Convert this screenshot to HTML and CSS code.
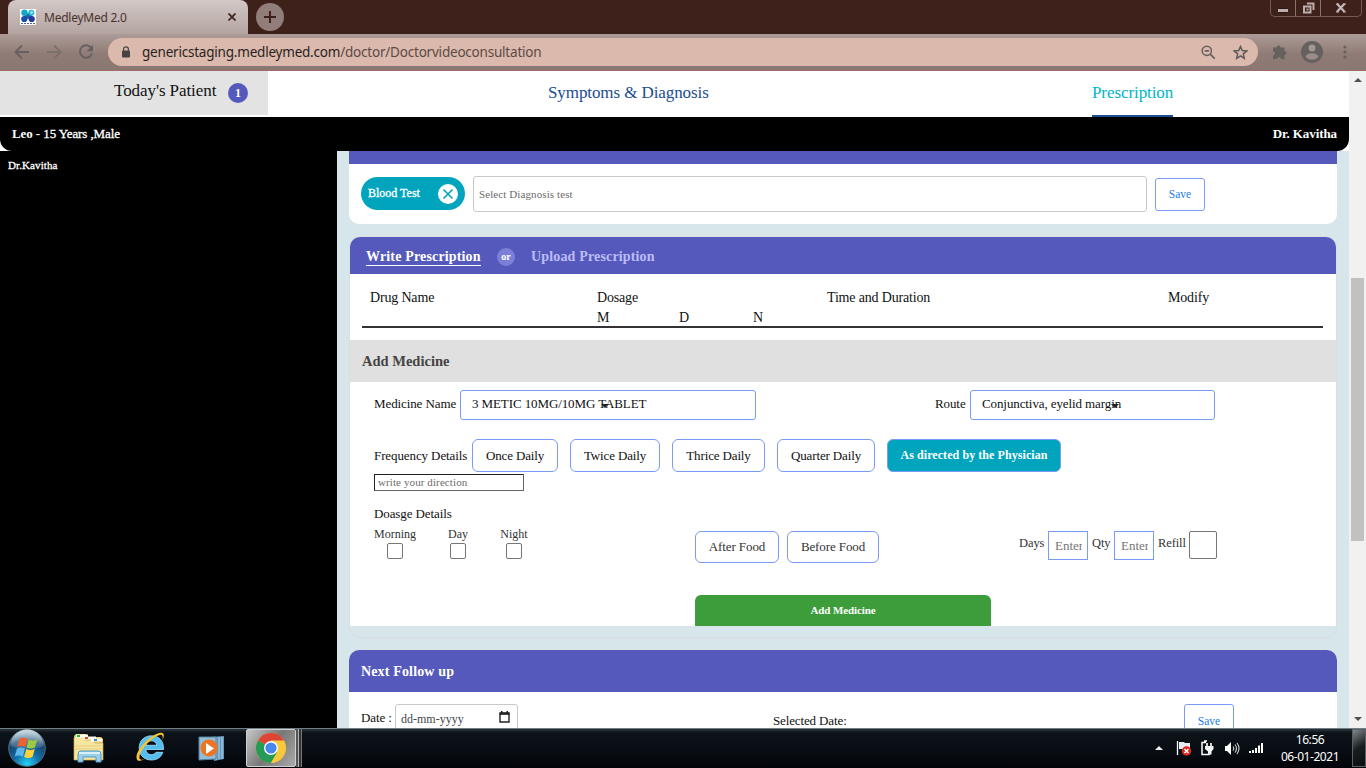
FILE: index.html
```html
<!DOCTYPE html>
<html lang="en">
<head>
<meta charset="utf-8">
<title>MedleyMed 2.0</title>
<link rel="stylesheet" href="styles.css">
</head>
<body>
<header class="titlebar">
  <div class="tab">
    <svg class="favicon" width="16" height="16" viewBox="0 0 16 16"><rect width="16" height="16" fill="#fff"/><path d="M4 4l8 6M4 10l8-6" stroke="#1c62b0" stroke-width="4" fill="none"/><circle cx="4.5" cy="3.800" r="3.200" fill="#13a9c9"/><circle cx="11.300" cy="3.800" r="3" fill="#22b8cf"/><circle cx="11.700" cy="3.500" r="1.300" fill="#b5f1f2"/><circle cx="4.300" cy="10" r="3.100" fill="#164fa8"/><circle cx="11.700" cy="10" r="3.100" fill="#233a9c"/><path d="M1 14.500h14" stroke="#4b62a8" stroke-dasharray="2 1"/></svg>
    <span class="tab-title">MedleyMed 2.0</span>
    <svg class="tab-close" width="8" height="8" viewBox="0 0 8 8"><path d="M.5.5l7 7M7.5.5l-7 7" stroke="#3d2420" stroke-width="1.700"/></svg>
  </div>
  <div class="new-tab"><svg width="12" height="12" viewBox="0 0 12 12"><path d="M6 0v12M0 6h12" stroke="#3d201b" stroke-width="2"/></svg></div>
  <div class="window-buttons">
    <span class="wb"><svg width="12" height="12" viewBox="0 0 12 12"><rect x=".5" y="6.500" width="11" height="4" rx="1" fill="#bcaeac" stroke="#2a1511"/></svg></span>
    <span class="wb"><svg width="13" height="13" viewBox="0 0 13 13"><path d="M5 1.500h6.500v6.500M3 4.500h5.500v6H2v-6z" fill="none" stroke="#bcaeac" stroke-width="2"/><rect x="4.500" y="6.500" width="2" height="2" fill="#bcaeac"/></svg></span>
    <span class="wb wb-close"><svg width="12" height="10" viewBox="0 0 12 10"><path d="M2 .8l7.500 8M9.500 .8l-7.500 8" stroke="#c4b7b5" stroke-width="2.300"/><path d="M1 1h3M8 1h3M1 9h3M8 9h3" stroke="#c4b7b5" stroke-width="1.200"/></svg></span>
  </div>
</header>
<nav class="toolbar">
  <svg class="nav-icon" width="16" height="16" viewBox="0 0 16 16"><path d="M15 8H2M8 1.500L1.500 8 8 14.500" fill="none" stroke="#666160" stroke-width="2"/></svg>
  <svg class="nav-icon" width="16" height="16" viewBox="0 0 16 16"><path d="M1 8h13M8 1.500L14.500 8 8 14.500" fill="none" stroke="#7d716e" stroke-width="2"/></svg>
  <svg class="nav-icon" width="16" height="16" viewBox="0 0 16 16"><path d="M13.200 4A6.200 6.200 0 1 0 14 9.500" fill="none" stroke="#666160" stroke-width="2"/><path d="M15 .8v6.500H8.500z" fill="#666160"/></svg>
  <div class="address">
    <svg width="10" height="12" viewBox="0 0 10 12"><rect x="1" y="4.500" width="8" height="7" rx="1" fill="#4b4342"/><path d="M2.600 5V3.200a2.400 2.400 0 0 1 4.800 0V5" fill="none" stroke="#4b4342" stroke-width="1.200"/></svg>
    <span class="url">genericstaging.medleymed.com<span class="url-path">/doctor/Doctorvideoconsultation</span></span>
    <svg class="zoom" width="15" height="15" viewBox="0 0 15 15"><circle cx="5.800" cy="5.800" r="4.600" fill="none" stroke="#68605e" stroke-width="1.500"/><path d="M3.700 5.800h4.200M9.200 9.200l4.500 4.500" stroke="#68605e" stroke-width="1.700"/></svg>
    <svg class="star" width="15" height="15" viewBox="0 0 15 15"><path d="M7.500 1.500l1.800 4.100 4.400.4-3.400 2.900 1 4.400-3.800-2.400-3.800 2.400 1-4.400L1.300 6l4.400-.4z" fill="none" stroke="#5f5957" stroke-width="1.500"/></svg>
  </div>
  <svg class="puzzle" width="16" height="16" viewBox="0 0 16 16"><path d="M1 3.500h3.500a2 2 0 1 1 4 0H12.500V7a2 2 0 1 1 0 4v4H9a2 2 0 0 0-4 0H1v-3.500a2 2 0 0 0 0-4z" fill="#66605f"/></svg>
  <svg class="avatar" width="22" height="22" viewBox="0 0 22 22"><circle cx="11" cy="11" r="11" fill="#66605f"/><circle cx="11" cy="7" r="3.400" fill="#a59894"/><path d="M4.500 15.500c1-2.600 4-3.300 6.500-3.300s5.500.7 6.500 3.300c-1.500 2.200-4 3.300-6.500 3.300s-5-1.100-6.500-3.300z" fill="#9b8c87"/></svg>
  <svg class="kebab" width="4" height="14" viewBox="0 0 4 14"><g fill="#66605f"><circle cx="2" cy="2" r="1.600"/><circle cx="2" cy="7" r="1.600"/><circle cx="2" cy="12" r="1.600"/></g></svg>
</nav>
<div class="viewport">
  <main class="page">
    <div class="page-tabs">
      <div class="today"><span class="today-text">Today's Patient</span><span class="count">1</span></div>
      <div class="symptoms">Symptoms &amp; Diagnosis</div>
      <div class="presc-tab">Prescription</div>
    </div>
    <div class="patient-wrap"><div class="patient-bar"><b>Leo - <span class="age">15 Years ,Male</span></b><b class="doctor">Dr. Kavitha</b></div></div>
    <div class="work">
      <aside class="video">Dr.Kavitha</aside>
      <section class="cards">
        <div class="card diagnosis">
          <div class="strip"></div>
          <div class="diag-row">
            <span class="chip"><span class="chip-text">Blood Test</span><svg width="20" height="20" viewBox="0 0 20 20"><circle cx="10" cy="10" r="10" fill="#fff"/><path d="M5.500 5.500l9 9M14.500 5.500l-9 9" stroke="#00a4bd" stroke-width="1.600"/></svg></span>
            <span class="diag-input">Select Diagnosis test</span>
            <span class="save">Save</span>
          </div>
        </div>
        <div class="card rx">
          <div class="rx-head"><span class="write">Write Prescription</span><span class="or">or</span><span class="upload">Upload Prescription</span></div>
          <div class="drug-table">
            <div class="drug-row"><span>Drug Name</span><span>Dosage</span><span>Time and Duration</span><span>Modify</span></div>
            <div class="dose-row"><span>M</span><span>D</span><span>N</span></div>
          </div>
          <div class="add-head">Add Medicine</div>
          <div class="form">
            <div class="name-row">
              <span class="l-name">Medicine Name</span><span class="select med"><span>3 METIC 10MG/10MG TABLET</span><i class="caret"></i></span>
              <span class="l-route">Route</span><span class="select route"><span>Conjunctiva, eyelid margin</span><i class="caret"></i></span>
            </div>
            <div class="freq-row">
              <span class="l-freq">Frequency Details</span>
              <span class="pill p1">Once Daily</span><span class="pill p2">Twice Daily</span><span class="pill p3">Thrice Daily</span><span class="pill p4">Quarter Daily</span><span class="pill p5">As directed by the Physician</span>
            </div>
            <div class="direction">write your direction</div>
            <div class="l-dosage">Doasge Details</div>
            <div class="dosage-row">
              <div class="check"><span>Morning</span><i class="box"></i></div>
              <div class="check day"><span>Day</span><i class="box"></i></div>
              <div class="check night"><span>Night</span><i class="box"></i></div>
              <div class="intake">
                <span class="food after">After Food</span><span class="food before">Before Food</span>
                <span class="l-num l-days">Days</span><span class="num"><span>Enter</span></span>
                <span class="l-num l-qty">Qty</span><span class="num"><span>Enter</span></span>
                <span class="l-num l-refill">Refill</span><span class="refill"></span>
              </div>
            </div>
            <div class="add-btn">Add Medicine</div>
          </div>
        </div>
        <div class="card follow">
          <div class="follow-head">Next Follow up</div>
          <div class="follow-row">
            <span class="l-date">Date :</span>
            <span class="date-input"><span>dd-mm-yyyy</span><svg width="11" height="12" viewBox="0 0 11 12"><path d="M1 2.500h9v8.500H1z" fill="none" stroke="#222" stroke-width="1.400"/><path d="M.5 1.200h10v2.600H.5zM2 0h1.500v2H2zM7.500 0H9v2H7.500z" fill="#222"/></svg></span>
            <span class="selected">Selected Date:</span>
            <span class="save follow-save">Save</span>
          </div>
        </div>
      </section>
    </div>
  </main>
  <div class="scrollbar">
    <svg width="8" height="4" viewBox="0 0 8 4"><path d="M0 4l4-4 4 4z" fill="#505050"/></svg>
    <div class="thumb"></div>
    <svg width="8" height="4" viewBox="0 0 8 4"><path d="M0 0l4 4 4-4z" fill="#505050"/></svg>
  </div>
</div>
<footer class="taskbar">
  <svg class="start" width="38" height="38" viewBox="0 0 38 38"><defs><radialGradient id="orb" cx=".5" cy=".95" r=".9"><stop offset="0" stop-color="#25d5f8"/><stop offset=".4" stop-color="#126ca6"/><stop offset=".75" stop-color="#18436c"/><stop offset="1" stop-color="#7f9fb4"/></radialGradient><linearGradient id="shine" x2="0" y2="1"><stop offset="0" stop-color="#dbe8ec" stop-opacity=".85"/><stop offset="1" stop-color="#b2cad6" stop-opacity=".15"/></linearGradient></defs><circle cx="19" cy="19" r="18.300" fill="url(#orb)" stroke="#526d7e"/><path d="M2.500 17a16.500 16.500 0 0 1 33 0c-9 4-24 4-33 0z" fill="url(#shine)"/><path d="M11.500 10q4-2.500 8 0l-2.200 8q-4-2.200-8 0z" fill="#ef6230"/><path d="M20.700 10.500q4.500 2 8.500-.3l-2.200 8q-4 2.300-8.500.3z" fill="#9bcb43"/><path d="M9 19.500q4-2.200 8 0l-2.200 8q-4-2.200-8 0z" fill="#5db9ed"/><path d="M18.300 20q4.500 2 8.500-.3l-2.200 8q-4 2.300-8.500.3z" fill="#fdd13a"/></svg>
  <svg class="explorer" width="34" height="31" viewBox="0 0 34 31"><path d="M2 3l2-2h10l2 3h13l2 2v21H2z" fill="#e8ce74"/><path d="M4 3h9v4h9l1 3h8v17H2V5z" fill="#f7e6a0" stroke="#c8a84f" stroke-width=".7"/><path d="M4 1.500h12v3H4zM12 3.500h12v3H12zM19 5.500h11v3H19z" fill="#fbfbf1"/><path d="M5 2h3v2H5z" fill="#27b33a"/><path d="M13 4h3v2h-3z" fill="#d94b2d"/><path d="M22 6h3v2h-3z" fill="#3b8cd8"/><path d="M3 13h28M3 16h28" stroke="#e8cf80"/><path d="M6 29V21q0-3 3-3h17q3 0 3 3v8h-5v-5H11v5z" fill="#9bcfe9" stroke="#4e9cc8"/><path d="M7 20h21" stroke="#d9f0f8" stroke-width="2"/></svg>
  <svg class="ie" width="32" height="32" viewBox="0 0 32 32"><path d="M28.500 18.500H10.800c.4 3.200 2.500 5.200 5.500 5.200 2.200 0 3.500-.8 4.700-2.400h6.800c-1.700 5.100-5.800 7.700-11.300 7.700-7.200 0-12.300-4.700-12.300-12S9.300 4.800 16.400 4.800c7.800 0 12.500 5.300 12.100 13.700zM10.900 14.300h10.800c-.4-2.900-2.400-4.500-5.300-4.500s-5 1.700-5.500 4.500z" fill="#54bdf0" stroke="#a6e1fb" stroke-width=".8"/><path d="M27.500 9c2.500-5 1.500-8-3-7C15 4 2 18 1.500 26c-.2 5 4 4.500 8 2-3.500 1.300-5.500.8-5-2.500C5.500 18 17 6 24.500 4c3-.8 3.700 1.300 3 5z" fill="#f6c52f"/></svg>
  <svg class="media" width="27" height="27" viewBox="0 0 27 27"><path d="M12 2l14-1v23l-10 2z" fill="#6595ba"/><path d="M18 2v23M21 2v22M24 2v22" stroke="#b4d9ec"/><path d="M1 2l17 0v22L1 25z" fill="#90bed7" stroke="#547f9f"/><circle cx="11" cy="13" r="8.500" fill="#ef7421"/><path d="M8 8v11l8-5.500z" fill="#fff"/></svg>
  <div class="chrome-button"><svg width="30" height="30" viewBox="0 0 30 30"><circle cx="15" cy="15" r="15" fill="#f7c93b"/><path d="M15 15L2 7.500A15 15 0 0 1 28 7.500H15z" fill="#dc4535"/><path d="M2 7.500A15 15 0 0 0 15 30l6.500-11.300L15 15z" fill="#259b55"/><path d="M15 8h13A15 15 0 0 1 15 30l6.500-11.300z" fill="#f7c93b"/><circle cx="15" cy="15" r="7" fill="#fff"/><circle cx="15" cy="15" r="5.600" fill="#4688ee"/></svg></div>
  <i class="stack"></i><i class="stack stack-2"></i>
  <div class="tray">
    <svg width="8" height="4" viewBox="0 0 8 4"><path d="M0 4l4-4 4 4z" fill="#eee"/></svg>
    <svg class="flag" width="16" height="16" viewBox="0 0 16 16"><path d="M1.500 1v14" stroke="#fff" stroke-width="1.300"/><path d="M3 2h5l1 1h5v7H8L7 9H3z" fill="#e8ecee"/><circle cx="10.500" cy="11" r="4.700" fill="#d62921"/><path d="M8.500 9l4 4M12.500 9l-4 4" stroke="#fff" stroke-width="1.500"/></svg>
    <svg class="power" width="14" height="16" viewBox="0 0 14 16"><path d="M6 2.500H2v12h7V12M4 1h3" fill="none" stroke="#fff" stroke-width="1.500"/><path d="M7 3v4M11 3v4" stroke="#fff" stroke-width="1.600"/><path d="M5 6h8.500v3l-2 2.500v3H8v-3L5 9z" fill="#f3f4f4"/></svg>
    <svg class="volume" width="16" height="15" viewBox="0 0 16 15"><path d="M1 5h2l4-4v13l-4-4H1z" fill="#fff"/><path d="M9 5.500q1.500 2 0 4M11 3.500q3 4 0 8M13 2q4 5.500 0 11" fill="none" stroke="#cfd3d4" stroke-width="1.100"/></svg>
    <svg class="signal" width="15" height="12" viewBox="0 0 15 12"><path d="M0 9h2v2H0zM3 8h2v3H3zM6 6h2v5H6zM9 3.500h2V11H9zM12 1h2v10h-2z" fill="#fff"/></svg>
    <div class="clock"><span>16:56</span><span class="d">06-01-2021</span></div>
  </div>
  <i class="show-desktop"></i>
</footer>
</body>
</html>
```

FILE: styles.css
```css
* { box-sizing: border-box; }
body { margin: 0; width: 1366px; height: 768px; overflow: hidden; display: flex; flex-direction: column; font-family: "Liberation Serif", serif; color: #111; white-space: nowrap; }
svg { display: block; flex: none; }
i { display: block; }

/* Browser frame */
.titlebar { height: 34px; flex: none; background: #3f211b; display: flex; padding-left: 8px; font-family: "Noto Sans", sans-serif; }
.tab { width: 240px; height: 34px; border-radius: 8px 8px 0 0; background: linear-gradient(#d2c8c6, #b3a4a0); display: flex; align-items: center; padding: 0 12px; }
.tab-title { margin-left: 8px; font-size: 12px; letter-spacing: -.25px; color: #4b312e; flex: 1; }
.new-tab { width: 28px; height: 28px; margin: 3px 0 0 8px; border-radius: 50%; background: #917d79; display: grid; place-items: center; }
.window-buttons { margin-left: auto; margin-right: 4px; width: 92px; height: 17px; display: flex; border: 1px solid #765b55; border-top: 0; border-radius: 0 0 5px 5px; }
.wb { width: 25px; display: grid; place-items: center; border-right: 1px solid #8b716c; }
.wb-close { width: 40px; border: 0; }
.toolbar { height: 37px; flex: none; background: linear-gradient(#ac9b97, #907c76 55%, #8b7771); border-bottom: 1px solid #9d6b68; display: flex; align-items: center; padding-left: 14px; font-family: "Noto Sans", sans-serif; }
.nav-icon { margin-right: 16px; }
.address { width: 1150px; height: 28px; margin-left: -2px; border-radius: 14px; background: #dbb9ac; display: flex; align-items: center; padding-left: 13px; }
.url { width: 1054px; margin-left: 11px; font-size: 13.5px; letter-spacing: -.21px; color: #281f1e; }
.url-path { color: #5c4a46; }
.zoom { margin-left: 5px; }
.star { margin-left: 17px; }
.puzzle { margin-left: 14px; }
.avatar { margin-left: 13px; }
.kebab { margin-left: 20px; }

/* Page shell */
.viewport { height: 657px; flex: none; display: flex; }
.page { width: 1349px; display: flex; flex-direction: column; background: #fff; }
.scrollbar { width: 17px; background: #f1f1f1; display: flex; flex-direction: column; align-items: center; padding: 7px 0 7px; }
.thumb { width: 13px; height: 263px; margin-top: 196px; margin-bottom: auto; background: #c1c1c1; }
.page-tabs { height: 46px; flex: none; display: flex; align-items: flex-start; }
.today { width: 268px; height: 44px; background: #e3e3e3; display: flex; padding: 11px 0 0 114px; font-size: 17px; letter-spacing: -.07px; line-height: 18px; }
.today-text { width: 102px; }
.count { width: 20px; height: 20px; margin: 1px 0 0 12px; border-radius: 50%; background: #5559bb; color: #fff; font-size: 12px; font-weight: bold; line-height: 20px; text-align: center; }
.symptoms { margin-left: 280px; width: 160px; padding-top: 13px; font-size: 17px; letter-spacing: -.09px; line-height: 18px; color: #1b4d91; }
.presc-tab { margin-left: 384px; width: 81px; height: 46px; padding-top: 13px; font-size: 17px; letter-spacing: -.08px; line-height: 18px; color: #00b5cc; border-bottom: 2px solid #1b4d91; }
.patient-wrap { flex: none; background: #fff; }
.patient-bar { height: 34px; background: #000; color: #fff; border-radius: 0 0 12px 12px; display: flex; justify-content: space-between; padding: 0 12px; line-height: 33px; font-size: 13px; letter-spacing: -.09px; }
.age { font-weight: normal; -webkit-text-stroke: .3px #fff; }
.work { height: 577px; overflow: hidden; display: flex; }
.video { width: 337px; background: #000; color: #fff; padding: 7px 8px; font-size: 11px; line-height: 14px; letter-spacing: .1px; -webkit-text-stroke: .3px #fff; }
.cards { width: 1012px; padding: 0 12px; background: #d7e6ea; }

/* Diagnosis card */
.diagnosis { height: 73px; border-radius: 0 0 10px 10px; background: #fff; overflow: hidden; }
.strip { height: 13px; background: #5559bb; }
.diag-row { display: flex; align-items: center; height: 60px; padding-left: 12px; }
.chip { width: 104px; height: 33px; margin-top: -1px; border-radius: 17px; background: #00a4bd; color: #fff; display: flex; align-items: center; padding-left: 7px; font-size: 12px; -webkit-text-stroke: .3px #fff; }
.chip-text { width: 70px; }
.chip svg { -webkit-text-stroke: 0; }
.diag-input { width: 674px; height: 36px; margin: 0 8px; border: 1px solid #c8c8c8; border-radius: 3px; line-height: 35px; padding-left: 5px; font-size: 11px; letter-spacing: .1px; color: #6c6c6c; }
.save { width: 50px; height: 33px; border: 1px solid #7a9bf5; border-radius: 3px; text-align: center; font-size: 11.500px; line-height: 31px; color: #1a7bec; background: #fff; }

/* Prescription card */
.rx { height: 402px; margin-top: 12px; border: 1px solid #dadedd; border-radius: 11px; overflow: hidden; }
.rx-head { height: 37px; background: #5559bb; display: flex; align-items: center; padding-left: 16px; font-size: 14px; font-weight: bold; letter-spacing: .16px; }
.write { width: 115px; height: 19px; margin-top: 1px; line-height: 19px; color: #fff; border-bottom: 1px solid #fff; }
.or { width: 18px; height: 18px; margin: 3px 16px 0; border-radius: 50%; background: #7b7fd8; color: #fff; font-size: 10px; line-height: 17px; letter-spacing: 0; text-align: center; }
.upload { color: #bcbdf7; padding-top: 2px; }
.drug-table { height: 66px; background: #fff; padding: 14px 13px 0 12px; font-size: 14px; letter-spacing: -.17px; }
.drug-row { display: grid; grid-template-columns: 227px 230px 341px 1fr; line-height: 20px; padding-left: 8px; }
.dose-row { display: grid; grid-template-columns: 82px 74px 1fr; padding-left: 235px; height: 20px; line-height: 20px; border-bottom: 2px solid #333; }
.add-head { height: 42px; line-height: 42px; background: #e0e0e0; padding-left: 12px; font-size: 14.500px; font-weight: bold; color: #444; }
.form { height: 244px; background: #fff; padding: 8px 0 0 24px; font-size: 13px; letter-spacing: -.1px; }
.name-row { display: flex; height: 30px; line-height: 28px; }
.l-name { width: 86px; }
.select { height: 30px; border: 1px solid #7a9bf5; border-radius: 3px; padding-left: 11px; font-size: 13px; line-height: 26px; position: relative; }
.med { width: 296px; }
.route { width: 245px; }
.l-route { width: 35px; margin-left: 179px; }
.caret { position: absolute; top: 13px; left: 140px; border: 4px solid transparent; border-top-color: #222; border-bottom: 0; }
.freq-row { display: flex; margin-top: 19px; line-height: 33px; }
.l-freq { width: 98px; }
.pill { height: 33px; border: 1px solid #7a9bf5; border-radius: 6px; text-align: center; font-size: 13px; letter-spacing: -.14px; line-height: 31px; margin-right: 12px; }
.p1 { width: 86px; }
.p2 { width: 90px; }
.p3 { width: 93px; }
.p4 { width: 98px; }
.p5 { width: 174px; background: #00a4bd; color: #fff; font-weight: bold; font-size: 12px; letter-spacing: .07px; }
.direction { width: 150px; height: 17px; margin-top: 2px; border: 1px solid #666; border-top-color: #222; border-left-color: #222; padding-left: 3px; line-height: 15px; font-size: 11px; letter-spacing: .1px; color: #6c6c6c; }
.l-dosage { margin-top: 15px; height: 16px; line-height: 16px; }
.dosage-row { display: flex; align-items: flex-start; height: 73px; padding-top: 4px; }
.check { width: 42px; height: 35px; line-height: 16px; font-size: 12px; letter-spacing: 0; color: #333; display: flex; flex-direction: column; align-items: center; }
.day { width: 20px; margin-left: 32px; }
.night { width: 28px; margin-left: 32px; }
.box { width: 16px; height: 16px; margin-top: 1px; border: 1px solid #767676; border-radius: 2px; }
.intake { display: flex; margin: 5px 0 0 167px; color: #333; }
.food { height: 32px; border: 1px solid #7a9bf5; border-radius: 6px; line-height: 30px; text-align: center; }
.after { width: 84px; }
.before { width: 92px; margin-left: 8px; }
.l-num { line-height: 24px; font-size: 12.500px; }
.l-days { width: 29px; margin-left: 140px; }
.l-qty { width: 22px; margin-left: 4px; }
.l-refill { width: 31px; margin-left: 4px; }
.num { width: 40px; height: 29px; border: 1px solid #7a9bf5; padding: 0 5px 0 6px; font-size: 13px; letter-spacing: 0; line-height: 27px; color: #757575; }
.num span { display: block; overflow: hidden; }
.refill { width: 28px; height: 28px; border: 1px solid #767676; border-radius: 2px; }
.add-btn { width: 296px; height: 31px; margin-left: 321px; border-radius: 6px 6px 0 0; background: #3c9d3a; color: #fff; font-size: 11px; font-weight: bold; line-height: 31px; text-align: center; }

/* Follow up card */
.follow { height: 90px; margin-top: 12px; background: #fff; border-radius: 10px 10px 0 0; overflow: hidden; }
.follow-head { height: 42px; background: #5559bb; color: #fff; font-size: 14px; font-weight: bold; letter-spacing: .15px; line-height: 43px; padding-left: 12px; }
.follow-row { display: flex; align-items: flex-start; padding: 12px 0 0 12px; font-size: 13px; letter-spacing: -.13px; }
.l-date { width: 34px; line-height: 28px; }
.date-input { width: 123px; height: 33px; border: 1px solid #c8c8c8; border-radius: 3px; display: flex; justify-content: space-between; padding: 6px 7px 0 5px; font-size: 12px; letter-spacing: 0; line-height: 16px; color: #444; }
.selected { width: 411px; margin-left: 255px; line-height: 34px; }
.follow-save { letter-spacing: 0; line-height: 33px; }

/* Taskbar */
.taskbar { height: 40px; flex: none; background: linear-gradient(#2a343a, #0c1318 10%, #080d13 60%, #020408); border-top: 1px solid #6f7e84; display: flex; align-items: flex-start; padding-left: 8px; }
.explorer { margin: 4px 0 0 26px; }
.ie { margin: 2px 0 0 29px; }
.media { margin: 6px 0 0 31px; }
.chrome-button { width: 50px; height: 38px; margin-left: 21px; border: 1px solid #d0d0d0; border-radius: 2px; background: linear-gradient(125deg, #c7c7c7, #777 50%, #aaa); padding: 3px 0 0 9px; }
.stack { width: 3px; height: 38px; border-right: 1px solid #b4b4b4; background: #555; }
.stack-2 { background: #333; border-color: #777; }
.tray { margin-left: auto; display: flex; align-items: center; height: 38px; color: #fff; font-family: "Noto Sans", sans-serif; font-size: 12px; }
.flag { margin-left: 13px; }
.power { margin-left: 8px; }
.volume { margin-left: 10px; }
.signal { margin-left: 9px; }
.clock { width: 58px; margin-left: 17px; margin-right: 13px; display: flex; flex-direction: column; align-items: center; line-height: 17px; letter-spacing: -.45px; }
.show-desktop { width: 14px; height: 38px; border: 1px solid #5a6063; background: linear-gradient(145deg, #81878a, #181d20 50%, #0b0e11); }
```
